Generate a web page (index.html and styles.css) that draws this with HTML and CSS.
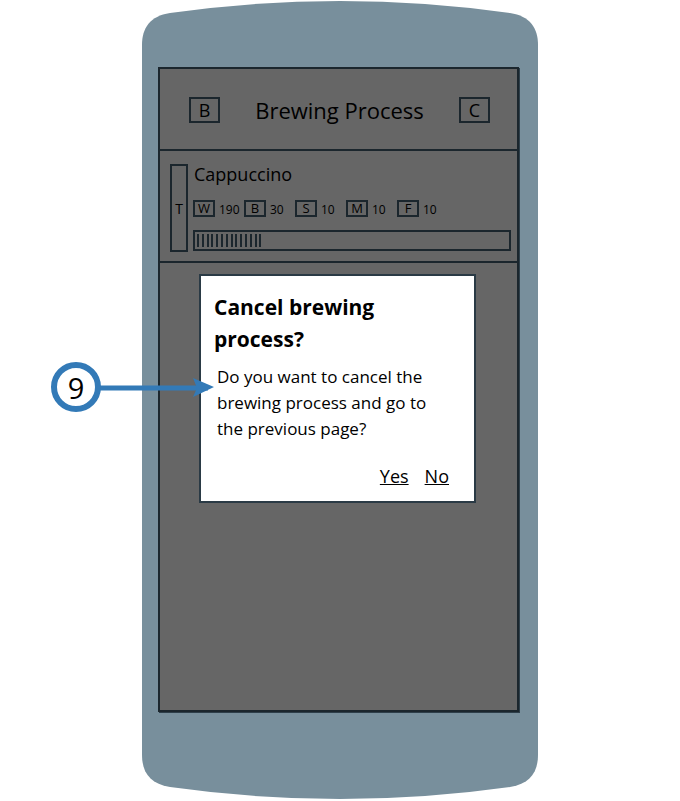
FILE: index.html
```html
<!DOCTYPE html>
<html lang="en">
<head>
  <meta charset="UTF-8" />
  <meta name="viewport" content="width=device-width, initial-scale=1" />
  <title>Brewing Process</title>
  <link rel="stylesheet" href="styles.css">
</head>
<body>
  <div class="phone">
    <svg class="phone-shape" width="396" height="800" viewBox="0 0 396 800">
      <path d="M28 13 Q198 -11 368 13 C388 16 396 28 396 45 V755 C396 772 388 784 368 787 Q198 811 28 787 C8 784 0 772 0 755 V45 C0 28 8 16 28 13 Z" fill="#788f9c"/>
    </svg>
    <div class="screen">
      <header class="app-bar">
        <span class="box box-lg">B</span>
        <h1 class="app-title">Brewing Process</h1>
        <span class="box box-lg">C</span>
      </header>
      <section class="status">
        <div class="tank">T</div>
        <div class="status-main">
          <div class="drink">Cappuccino</div>
          <div class="levels">
            <span class="level"><span class="box box-sm">W</span>190</span>
            <span class="level"><span class="box box-sm">B</span>30</span>
            <span class="level"><span class="box box-sm">S</span>10</span>
            <span class="level"><span class="box box-sm">M</span>10</span>
            <span class="level"><span class="box box-sm">F</span>10</span>
          </div>
          <div class="progress">
            <span class="tick"></span><span class="tick"></span><span class="tick"></span><span class="tick"></span>
            <span class="tick"></span><span class="tick"></span><span class="tick"></span><span class="tick"></span>
            <span class="tick"></span><span class="tick"></span><span class="tick"></span><span class="tick"></span>
            <span class="tick"></span><span class="tick"></span>
          </div>
        </div>
      </section>
      <div class="dialog">
        <h2 class="dialog-title">Cancel brewing process?</h2>
        <p class="dialog-text">Do you want to cancel the brewing process and go to the previous page?</p>
        <div class="dialog-actions">
          <a class="dialog-link" href="#">Yes</a>
          <a class="dialog-link" href="#">No</a>
        </div>
      </div>
    </div>
  </div>

  <!-- callout sits over the phone -->
  <svg class="callout-arrow" width="120" height="24" viewBox="0 0 120 24">
    <path d="M0 12 H110" stroke="#337ab7" stroke-width="5" fill="none"/>
    <path d="M95 2 L116 11 L95 21 L99 12 Z" fill="#337ab7"/>
  </svg>
  <div class="callout">9</div>
</body>
</html>
```

FILE: styles.css
```css
html, body {
  margin: 0;
  height: 801px;
  overflow: hidden;
  background: #fff;
}
body {
  position: relative;
  font-family: "Open Sans", sans-serif;
  color: #000;
}
.phone {
  position: relative;
  width: 396px;
  height: 800px;
  margin-left: 142px;
  padding: 67px 0 0 16px;
  box-sizing: border-box;
}
.phone-shape {
  position: absolute;
  left: 0;
  top: 0;
}
.screen {
  position: relative;
  width: 361px;
  height: 645px;
  box-sizing: border-box;
  background: #666;
  border: 2px solid #1b262d;
  box-shadow: 1px 1px 0 #2e3f4a;
}
.app-bar {
  display: flex;
  align-items: center;
  justify-content: space-between;
  height: 78px;
  padding: 2px 27px 0 29px;
  border-bottom: 2px solid #1b262d;
}
.app-title {
  margin: 0;
  font-size: 22px;
  font-weight: 400;
}
.box {
  display: flex;
  align-items: center;
  justify-content: center;
  box-sizing: border-box;
  border: 2px solid #1b262d;
}
.box-lg {
  width: 31px;
  height: 26px;
  font-size: 18px;
}
.box-sm {
  width: 22px;
  height: 17px;
  font-size: 13px;
}
.status {
  display: flex;
  gap: 5px;
  height: 112px;
  padding: 13px 6px 0 10px;
  box-sizing: border-box;
  border-bottom: 2px solid #1b262d;
}
.tank {
  display: flex;
  align-items: center;
  justify-content: center;
  box-sizing: border-box;
  width: 18px;
  height: 88px;
  border: 2px solid #1b262d;
  font-size: 14px;
}
.status-main {
  flex: 1;
}
.drink {
  height: 36px;
  padding-left: 1px;
  font-size: 18px;
  line-height: 20px;
}
.levels {
  display: flex;
  height: 30px;
  font-size: 12px;
}
.level {
  display: flex;
  align-items: flex-start;
  gap: 4px;
  width: 51px;
  line-height: 19px;
}
.progress {
  display: flex;
  gap: 2.8px;
  height: 21px;
  padding: 2px 2px;
  box-sizing: border-box;
  border: 2px solid #1b262d;
}
.tick {
  width: 2px;
  background: #1b262d;
}
.dialog {
  width: 277px;
  height: 229px;
  margin: 11px 0 0 39px;
  padding: 15px 13px;
  box-sizing: border-box;
  background: #fff;
  border: 2px solid #2a3a45;
}
.dialog-title {
  margin: 0;
  font-size: 21px;
  line-height: 32px;
  font-weight: 700;
}
.dialog-text {
  max-width: 228px;
  margin: 9px 0 0 3px;
  font-size: 17px;
  line-height: 26px;
}
.dialog-actions {
  display: flex;
  justify-content: flex-end;
  gap: 16px;
  margin-top: 22px;
  padding-right: 12px;
  font-size: 18px;
}
.dialog-link {
  color: #000;
  text-decoration: underline;
}
.callout {
  position: absolute;
  left: 51px;
  top: 362px;
  width: 50px;
  height: 50px;
  box-sizing: border-box;
  display: flex;
  align-items: center;
  justify-content: center;
  background: #fff;
  border: 6px solid #337ab7;
  border-radius: 50%;
  font-size: 29px;
}
.callout-arrow {
  position: absolute;
  left: 98px;
  top: 376px;
}
```
